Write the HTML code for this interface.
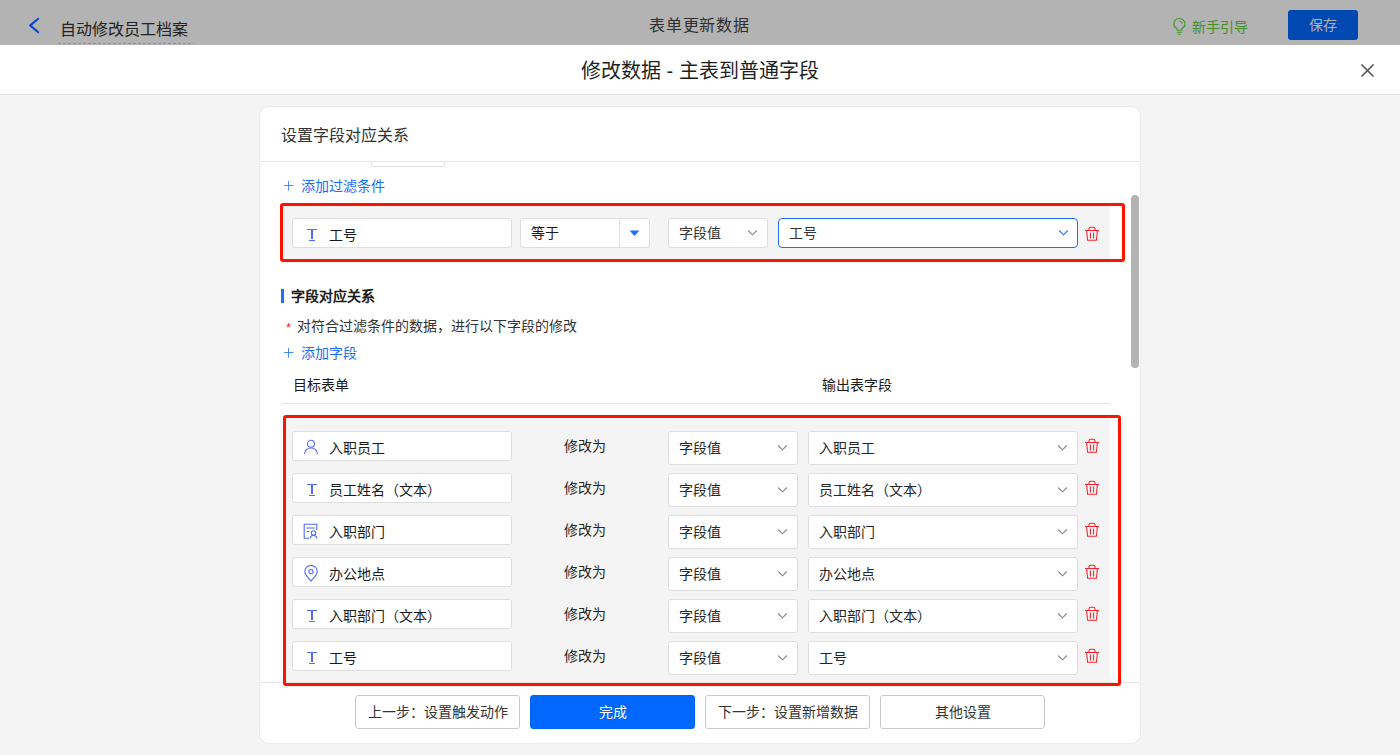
<!DOCTYPE html>
<html lang="zh-CN"><head><meta charset="utf-8">
<style>
*{box-sizing:border-box;margin:0;padding:0}
html,body{width:1400px;height:755px;overflow:hidden;background:#f4f4f4;font-family:"Liberation Sans",sans-serif;color:#333}
.a{position:absolute}
.t{position:absolute;white-space:nowrap;line-height:20px;font-size:14px}
#top{left:0;top:0;width:1400px;height:45px;background:#b3b3b3}
#hdr{left:0;top:45px;width:1400px;height:50px;background:#fff;border-bottom:1px solid #e1e1e1}
#card{left:259px;top:106px;width:882px;height:638px;background:#fff;border-radius:10px;border:1px solid #ebebeb}
#scroll{left:260px;top:162px;width:880px;height:520px;overflow:hidden}
.box{position:absolute;background:#fff;border:1px solid #dedede;border-radius:3px}
.red{position:absolute;border:3px solid #ff1200;border-radius:3px}
.btn{position:absolute;top:695px;width:165px;height:34px;border:1px solid #c9c9c9;border-radius:3px;background:#fff;font-size:14px;line-height:32px;text-align:center;color:#333}
</style></head><body>
<div id="top" class="a"></div>
<svg class="a" style="left:26px;top:16px" width="16" height="20" viewBox="0 0 16 20"><polyline points="12.2,2.8 4.2,9.4 12.2,16.2" fill="none" stroke="#0b45c9" stroke-width="2.1" stroke-linecap="round" stroke-linejoin="round"/></svg>
<div class="t" style="left:60px;top:20px;font-size:16px;color:#222">自动修改员工档案</div>
<div class="a" style="left:58px;top:43px;width:136px;height:1px;background:repeating-linear-gradient(90deg,#8f8f8f 0 3px,transparent 3px 5px)"></div>
<div class="t" style="left:649px;top:16px;font-size:16px;letter-spacing:0.8px;color:#2e2e2e">表单更新数据</div>
<svg class="a" style="left:1173px;top:18px" width="13" height="18" viewBox="0 0 13 18"><path d="M4.1 12.2V10.8C2 9.8 0.8 8 0.8 6.1A5.6 5.6 0 0 1 12 6.1C12 8 10.8 9.8 8.7 10.8V12.2Z" fill="none" stroke="#3f9a2a" stroke-width="1.1"/><path d="M4 14.2H8.8M5 16.2H7.8" stroke="#3f9a2a" stroke-width="1.1"/><path d="M6.5 3.2A3 3 0 0 1 9.2 5.8" fill="none" stroke="#3f9a2a" stroke-width="1.1"/></svg>
<div class="t" style="left:1192px;top:17px;color:#43902a">新手引导</div>
<div class="a" style="left:1288px;top:10px;width:70px;height:30px;background:#0049b3;border-radius:3px"></div>
<div class="t" style="left:1309px;top:15px;color:#b3b3b3">保存</div>
<div id="hdr" class="a"></div>
<div class="t" style="left:581px;top:61px;font-size:20px;color:#1f1f1f">修改数据 - 主表到普通字段</div>
<svg class="a" style="left:1360px;top:63px" width="15" height="15" viewBox="0 0 15 15"><path d="M1.5 1.5L13.5 13.5M13.5 1.5L1.5 13.5" stroke="#555" stroke-width="1.6"/></svg>
<div id="card" class="a"></div>
<div class="t" style="left:281px;top:126px;font-size:16px;color:#333">设置字段对应关系</div>
<div class="a" style="left:261px;top:161px;width:878px;height:1px;background:#e6e6e6"></div>
<div id="scroll" class="a">
<div class="a" style="left:-260px;top:-162px;width:1400px;height:755px">
<div class="box" style="left:371px;top:136px;width:74px;height:31px"></div>
<svg class="a" style="left:284px;top:181px" width="10" height="10" viewBox="0 0 10 10"><path d="M4.5 0V9.5M0 4.5H9.5" stroke="#1a6dff" stroke-width="1" stroke-opacity="0.8"/></svg>
<div class="t" style="left:301px;top:176px;color:#1a6dff">添加过滤条件</div>
<div class="a" style="left:283px;top:206px;width:827px;height:53px;background:#f4f4f4"></div>
<div class="box" style="left:292px;top:218px;width:220px;height:30px"></div>
<div class="a" style="left:307px;top:229px;width:10px;height:1.3px;background:#4f6bff"></div><div class="a" style="left:311.3px;top:229px;width:1.4px;height:10px;background:#4f6bff"></div><div class="a" style="left:309px;top:240px;width:6px;height:1.3px;background:#4f6bff"></div>
<div class="t" style="left:329px;top:225px;color:#1a1a1a">工号</div>
<div class="box" style="left:520px;top:218px;width:130px;height:30px"></div>
<div class="a" style="left:619px;top:219px;width:1px;height:28px;background:#e0e0e0"></div>
<svg class="a" style="left:629px;top:230px" width="11" height="7" viewBox="0 0 11 7"><path d="M0.5 0.5H10.5L5.5 6Z" fill="#1e6fff"/></svg>
<div class="t" style="left:531px;top:223px;color:#1a1a1a">等于</div>
<div class="box" style="left:668px;top:218px;width:100px;height:30px"></div>
<div class="t" style="left:679px;top:223px;color:#333">字段值</div>
<svg class="a" style="left:746px;top:229px" width="12" height="8" viewBox="0 0 12 8"><polyline points="2.2,1.5 6.5,5.8 10.8,1.5" fill="none" stroke="#888" stroke-width="1.1"/></svg>
<div class="box" style="left:778px;top:218px;width:300px;height:30px;border-color:#1e6fff;border-radius:4px"></div>
<div class="t" style="left:789px;top:223px;color:#333">工号</div>
<svg class="a" style="left:1057px;top:229px" width="12" height="8" viewBox="0 0 12 8"><polyline points="2.2,1.5 6.5,5.8 10.8,1.5" fill="none" stroke="#1e6fff" stroke-width="1.1"/></svg>
<svg class="a" style="left:1084px;top:225px" width="16" height="17" viewBox="0 0 16 17"><path d="M1 5.5H15M5 5.5V3.7A1.5 1.5 0 0 1 6.5 2.2H9.5A1.5 1.5 0 0 1 11 3.7V5.5M2.6 5.5L3.6 15.3H12.4L13.4 5.5M6.4 7.5V13.5M9.6 7.5V13.5" fill="none" stroke="#f5222d" stroke-width="1.05"/></svg>
<div class="a" style="left:281px;top:289px;width:3px;height:14px;background:#1e6fff"></div>
<div class="t" style="left:291px;top:286px;font-weight:bold;color:#1a1a1a">字段对应关系</div>
<div class="t" style="left:286px;top:318px;color:#f5222d;font-size:13px">*</div>
<div class="t" style="left:297px;top:316px;color:#333">对符合过滤条件的数据，进行以下字段的修改</div>
<svg class="a" style="left:284px;top:348px" width="10" height="10" viewBox="0 0 10 10"><path d="M4.5 0V9.5M0 4.5H9.5" stroke="#1a6dff" stroke-width="1" stroke-opacity="0.8"/></svg>
<div class="t" style="left:301px;top:343px;color:#1a6dff">添加字段</div>
<div class="t" style="left:293px;top:375px;color:#1a1a1a">目标表单</div>
<div class="t" style="left:822px;top:375px;color:#1a1a1a">输出表字段</div>
<div class="a" style="left:282px;top:403px;width:828px;height:1px;background:#e6e6e6"></div>
<div class="a" style="left:284px;top:416px;width:826px;height:268px;background:#f4f4f4"></div>
<div class="box" style="left:292px;top:431px;width:220px;height:30px"></div>
<svg class="a" style="left:303px;top:439px" width="16" height="16" viewBox="0 0 16 16"><circle cx="8" cy="4.8" r="3.5" fill="none" stroke="#4f6bff" stroke-width="1.1"/><path d="M1.5 15.2C1.8 11.2 4.5 9 8 9S14.2 11.2 14.5 15.2" fill="none" stroke="#4f6bff" stroke-width="1.1"/></svg>
<div class="t" style="left:329px;top:438px;color:#1a1a1a">入职员工</div>
<div class="t" style="left:564px;top:436px;color:#262626">修改为</div>
<div class="box" style="left:668px;top:431px;width:130px;height:34px"></div>
<div class="t" style="left:679px;top:438px;color:#262626">字段值</div>
<svg class="a" style="left:776px;top:444px" width="12" height="8" viewBox="0 0 12 8"><polyline points="2.2,1.5 6.5,5.8 10.8,1.5" fill="none" stroke="#888" stroke-width="1.1"/></svg>
<div class="box" style="left:808px;top:431px;width:270px;height:34px"></div>
<div class="t" style="left:819px;top:438px;color:#262626">入职员工</div>
<svg class="a" style="left:1056px;top:444px" width="12" height="8" viewBox="0 0 12 8"><polyline points="2.2,1.5 6.5,5.8 10.8,1.5" fill="none" stroke="#888" stroke-width="1.1"/></svg>
<svg class="a" style="left:1084px;top:437px" width="16" height="17" viewBox="0 0 16 17"><path d="M1 5.5H15M5 5.5V3.7A1.5 1.5 0 0 1 6.5 2.2H9.5A1.5 1.5 0 0 1 11 3.7V5.5M2.6 5.5L3.6 15.3H12.4L13.4 5.5M6.4 7.5V13.5M9.6 7.5V13.5" fill="none" stroke="#f5222d" stroke-width="1.05"/></svg>
<div class="box" style="left:292px;top:473px;width:220px;height:30px"></div>
<div class="a" style="left:307px;top:484px;width:10px;height:1.3px;background:#4f6bff"></div><div class="a" style="left:311.3px;top:484px;width:1.4px;height:10px;background:#4f6bff"></div><div class="a" style="left:309px;top:495px;width:6px;height:1.3px;background:#4f6bff"></div>
<div class="t" style="left:329px;top:480px;color:#1a1a1a">员工姓名（文本）</div>
<div class="t" style="left:564px;top:478px;color:#262626">修改为</div>
<div class="box" style="left:668px;top:473px;width:130px;height:34px"></div>
<div class="t" style="left:679px;top:480px;color:#262626">字段值</div>
<svg class="a" style="left:776px;top:486px" width="12" height="8" viewBox="0 0 12 8"><polyline points="2.2,1.5 6.5,5.8 10.8,1.5" fill="none" stroke="#888" stroke-width="1.1"/></svg>
<div class="box" style="left:808px;top:473px;width:270px;height:34px"></div>
<div class="t" style="left:819px;top:480px;color:#262626">员工姓名（文本）</div>
<svg class="a" style="left:1056px;top:486px" width="12" height="8" viewBox="0 0 12 8"><polyline points="2.2,1.5 6.5,5.8 10.8,1.5" fill="none" stroke="#888" stroke-width="1.1"/></svg>
<svg class="a" style="left:1084px;top:479px" width="16" height="17" viewBox="0 0 16 17"><path d="M1 5.5H15M5 5.5V3.7A1.5 1.5 0 0 1 6.5 2.2H9.5A1.5 1.5 0 0 1 11 3.7V5.5M2.6 5.5L3.6 15.3H12.4L13.4 5.5M6.4 7.5V13.5M9.6 7.5V13.5" fill="none" stroke="#f5222d" stroke-width="1.05"/></svg>
<div class="box" style="left:292px;top:515px;width:220px;height:30px"></div>
<svg class="a" style="left:303px;top:523px" width="16" height="17" viewBox="0 0 16 17"><path d="M6 15.3H1.2V1.2H13.8V7" fill="none" stroke="#4f6bff" stroke-width="1.1"/><path d="M3.5 5H12M3.5 8.5H6.5" fill="none" stroke="#4f6bff" stroke-width="1.1"/><circle cx="10.5" cy="10" r="2.2" fill="none" stroke="#4f6bff" stroke-width="1.1"/><path d="M7 15.5C7.5 13.3 8.8 12.3 10.5 12.3S13.5 13.3 14 15.5" fill="none" stroke="#4f6bff" stroke-width="1.1"/></svg>
<div class="t" style="left:329px;top:522px;color:#1a1a1a">入职部门</div>
<div class="t" style="left:564px;top:520px;color:#262626">修改为</div>
<div class="box" style="left:668px;top:515px;width:130px;height:34px"></div>
<div class="t" style="left:679px;top:522px;color:#262626">字段值</div>
<svg class="a" style="left:776px;top:528px" width="12" height="8" viewBox="0 0 12 8"><polyline points="2.2,1.5 6.5,5.8 10.8,1.5" fill="none" stroke="#888" stroke-width="1.1"/></svg>
<div class="box" style="left:808px;top:515px;width:270px;height:34px"></div>
<div class="t" style="left:819px;top:522px;color:#262626">入职部门</div>
<svg class="a" style="left:1056px;top:528px" width="12" height="8" viewBox="0 0 12 8"><polyline points="2.2,1.5 6.5,5.8 10.8,1.5" fill="none" stroke="#888" stroke-width="1.1"/></svg>
<svg class="a" style="left:1084px;top:521px" width="16" height="17" viewBox="0 0 16 17"><path d="M1 5.5H15M5 5.5V3.7A1.5 1.5 0 0 1 6.5 2.2H9.5A1.5 1.5 0 0 1 11 3.7V5.5M2.6 5.5L3.6 15.3H12.4L13.4 5.5M6.4 7.5V13.5M9.6 7.5V13.5" fill="none" stroke="#f5222d" stroke-width="1.05"/></svg>
<div class="box" style="left:292px;top:557px;width:220px;height:30px"></div>
<svg class="a" style="left:303px;top:565px" width="16" height="17" viewBox="0 0 16 17"><path d="M8 16C4.5 12.5 1.8 9.8 1.8 6.6A6.2 6.2 0 0 1 14.2 6.6C14.2 9.8 11.5 12.5 8 16Z" fill="none" stroke="#4f6bff" stroke-width="1.1"/><circle cx="8" cy="6.6" r="2.1" fill="none" stroke="#4f6bff" stroke-width="1.1"/></svg>
<div class="t" style="left:329px;top:564px;color:#1a1a1a">办公地点</div>
<div class="t" style="left:564px;top:562px;color:#262626">修改为</div>
<div class="box" style="left:668px;top:557px;width:130px;height:34px"></div>
<div class="t" style="left:679px;top:564px;color:#262626">字段值</div>
<svg class="a" style="left:776px;top:570px" width="12" height="8" viewBox="0 0 12 8"><polyline points="2.2,1.5 6.5,5.8 10.8,1.5" fill="none" stroke="#888" stroke-width="1.1"/></svg>
<div class="box" style="left:808px;top:557px;width:270px;height:34px"></div>
<div class="t" style="left:819px;top:564px;color:#262626">办公地点</div>
<svg class="a" style="left:1056px;top:570px" width="12" height="8" viewBox="0 0 12 8"><polyline points="2.2,1.5 6.5,5.8 10.8,1.5" fill="none" stroke="#888" stroke-width="1.1"/></svg>
<svg class="a" style="left:1084px;top:563px" width="16" height="17" viewBox="0 0 16 17"><path d="M1 5.5H15M5 5.5V3.7A1.5 1.5 0 0 1 6.5 2.2H9.5A1.5 1.5 0 0 1 11 3.7V5.5M2.6 5.5L3.6 15.3H12.4L13.4 5.5M6.4 7.5V13.5M9.6 7.5V13.5" fill="none" stroke="#f5222d" stroke-width="1.05"/></svg>
<div class="box" style="left:292px;top:599px;width:220px;height:30px"></div>
<div class="a" style="left:307px;top:610px;width:10px;height:1.3px;background:#4f6bff"></div><div class="a" style="left:311.3px;top:610px;width:1.4px;height:10px;background:#4f6bff"></div><div class="a" style="left:309px;top:621px;width:6px;height:1.3px;background:#4f6bff"></div>
<div class="t" style="left:329px;top:606px;color:#1a1a1a">入职部门（文本）</div>
<div class="t" style="left:564px;top:604px;color:#262626">修改为</div>
<div class="box" style="left:668px;top:599px;width:130px;height:34px"></div>
<div class="t" style="left:679px;top:606px;color:#262626">字段值</div>
<svg class="a" style="left:776px;top:612px" width="12" height="8" viewBox="0 0 12 8"><polyline points="2.2,1.5 6.5,5.8 10.8,1.5" fill="none" stroke="#888" stroke-width="1.1"/></svg>
<div class="box" style="left:808px;top:599px;width:270px;height:34px"></div>
<div class="t" style="left:819px;top:606px;color:#262626">入职部门（文本）</div>
<svg class="a" style="left:1056px;top:612px" width="12" height="8" viewBox="0 0 12 8"><polyline points="2.2,1.5 6.5,5.8 10.8,1.5" fill="none" stroke="#888" stroke-width="1.1"/></svg>
<svg class="a" style="left:1084px;top:605px" width="16" height="17" viewBox="0 0 16 17"><path d="M1 5.5H15M5 5.5V3.7A1.5 1.5 0 0 1 6.5 2.2H9.5A1.5 1.5 0 0 1 11 3.7V5.5M2.6 5.5L3.6 15.3H12.4L13.4 5.5M6.4 7.5V13.5M9.6 7.5V13.5" fill="none" stroke="#f5222d" stroke-width="1.05"/></svg>
<div class="box" style="left:292px;top:641px;width:220px;height:30px"></div>
<div class="a" style="left:307px;top:652px;width:10px;height:1.3px;background:#4f6bff"></div><div class="a" style="left:311.3px;top:652px;width:1.4px;height:10px;background:#4f6bff"></div><div class="a" style="left:309px;top:663px;width:6px;height:1.3px;background:#4f6bff"></div>
<div class="t" style="left:329px;top:648px;color:#1a1a1a">工号</div>
<div class="t" style="left:564px;top:646px;color:#262626">修改为</div>
<div class="box" style="left:668px;top:641px;width:130px;height:34px"></div>
<div class="t" style="left:679px;top:648px;color:#262626">字段值</div>
<svg class="a" style="left:776px;top:654px" width="12" height="8" viewBox="0 0 12 8"><polyline points="2.2,1.5 6.5,5.8 10.8,1.5" fill="none" stroke="#888" stroke-width="1.1"/></svg>
<div class="box" style="left:808px;top:641px;width:270px;height:34px"></div>
<div class="t" style="left:819px;top:648px;color:#262626">工号</div>
<svg class="a" style="left:1056px;top:654px" width="12" height="8" viewBox="0 0 12 8"><polyline points="2.2,1.5 6.5,5.8 10.8,1.5" fill="none" stroke="#888" stroke-width="1.1"/></svg>
<svg class="a" style="left:1084px;top:647px" width="16" height="17" viewBox="0 0 16 17"><path d="M1 5.5H15M5 5.5V3.7A1.5 1.5 0 0 1 6.5 2.2H9.5A1.5 1.5 0 0 1 11 3.7V5.5M2.6 5.5L3.6 15.3H12.4L13.4 5.5M6.4 7.5V13.5M9.6 7.5V13.5" fill="none" stroke="#f5222d" stroke-width="1.05"/></svg>
</div>
</div>
<div class="red" style="left:280px;top:203px;width:845px;height:59px"></div>
<div class="a" style="left:1131px;top:195px;width:8px;height:173px;background:#b3b3b3;border-radius:4px"></div>
<div class="a" style="left:261px;top:682px;width:878px;height:1px;background:#e6e6e6"></div>
<div class="red" style="left:283px;top:415px;width:838px;height:271px"></div>
<div class="btn" style="left:355px">上一步：设置触发动作</div>
<div class="btn" style="left:530px;background:#0068ff;border-color:#0068ff;color:#fff">完成</div>
<div class="btn" style="left:705px">下一步：设置新增数据</div>
<div class="btn" style="left:880px">其他设置</div>
</body></html>
